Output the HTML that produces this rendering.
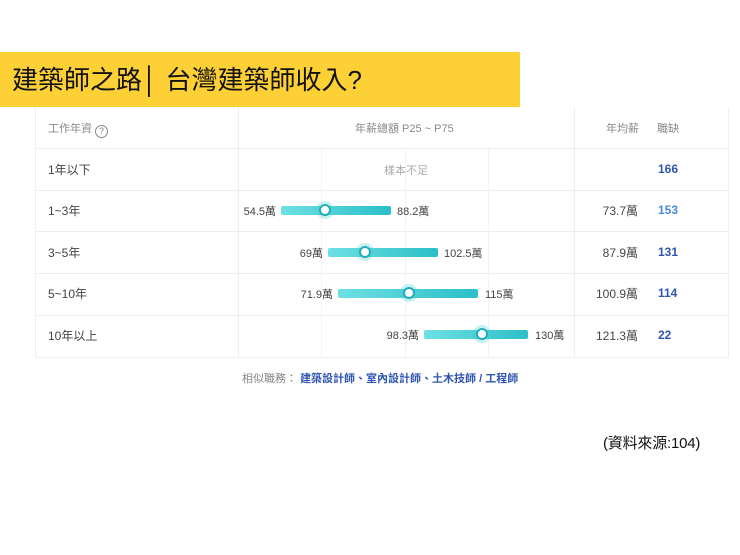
<!DOCTYPE html><html><head><meta charset="utf-8"><style>
body{margin:0;width:740px;height:555px;background:#fff;position:relative;overflow:hidden;font-family:"Liberation Sans","Noto Sans CJK TC",sans-serif}
.a{position:absolute;white-space:nowrap}
.ban{left:0;top:52px;width:520px;height:55px;background:#fdd135}
.t{left:12px;top:62px;font-size:26px;color:#111;line-height:36px}
.tbl{left:35px;top:107px;width:692px;height:250px;border:1px solid #f0f0f0;border-top:none}
.h{left:0;width:692px;height:1px;background:#eee}
.v{top:0;width:1px;background:#eee}
.g{color:#888;font-size:11px}
.l{font-size:12px;color:#444}
.n{font-size:12px;color:#2e55b0;font-weight:bold}
.bar{height:9px;border-radius:2px;background:linear-gradient(90deg,#6ee0e3,#2bbfc8)}
.dot{width:8px;height:8px;border-radius:50%;background:#fff;border:2px solid #21aeb8;box-shadow:0 0 0 3px rgba(70,205,210,.3)}
</style></head><body>
<div class="a ban"></div>
<div class="a t">建築師之路│ 台灣建築師收入?</div>
<div class="a tbl">
<div class="a h" style="top:41px"></div><div class="a h" style="top:83px"></div><div class="a h" style="top:124px"></div><div class="a h" style="top:166px"></div><div class="a h" style="top:208px"></div>
<div class="a v" style="left:202px;height:250px"></div>
<div class="a v" style="left:538px;height:250px"></div>
<div class="a v" style="left:285px;top:41px;height:209px;background:#f3f3f3"></div>
<div class="a v" style="left:369px;top:41px;height:209px;background:#f3f3f3"></div>
<div class="a v" style="left:452px;top:41px;height:209px;background:#f3f3f3"></div>
</div>
<div class="a g" style="left:48px;top:120px">工作年資 <span style="display:inline-block;width:11px;height:11px;border:1px solid #888;border-radius:50%;font-size:9px;text-align:center;line-height:11px;vertical-align:-2px">?</span></div>
<div class="a g" style="left:355px;top:120px">年薪總額 P25 ~ P75</div>
<div class="a g" style="left:606px;top:120px">年均薪</div>
<div class="a g" style="left:657px;top:120px">職缺</div>
<div class="a l" style="left:48px;top:161px">1年以下</div>
<div class="a l" style="left:48px;top:202px">1~3年</div>
<div class="a l" style="left:48px;top:244px">3~5年</div>
<div class="a l" style="left:48px;top:285px">5~10年</div>
<div class="a l" style="left:48px;top:327px">10年以上</div>
<div class="a g" style="left:384px;top:162px;color:#aaa">樣本不足</div>
<div class="a n" style="left:658px;top:162px">166</div>
<div class="a n" style="left:658px;top:203px;color:#4a88e0">153</div>
<div class="a n" style="left:658px;top:245px">131</div>
<div class="a n" style="left:658px;top:286px">114</div>
<div class="a n" style="left:658px;top:328px">22</div>
<div class="a l" style="right:102px;top:202px">73.7萬</div>
<div class="a l" style="right:102px;top:244px">87.9萬</div>
<div class="a l" style="right:102px;top:285px">100.9萬</div>
<div class="a l" style="right:102px;top:327px">121.3萬</div>
<div class="a bar" style="left:281px;top:206px;width:110px"></div><div class="a dot" style="left:319px;top:204px"></div>
<div class="a l" style="right:464px;top:203px;font-size:11px">54.5萬</div><div class="a l" style="left:397px;top:203px;font-size:11px">88.2萬</div>
<div class="a bar" style="left:328px;top:248px;width:110px"></div><div class="a dot" style="left:359px;top:246px"></div>
<div class="a l" style="right:417px;top:245px;font-size:11px">69萬</div><div class="a l" style="left:444px;top:245px;font-size:11px">102.5萬</div>
<div class="a bar" style="left:338px;top:289px;width:140px"></div><div class="a dot" style="left:403px;top:287px"></div>
<div class="a l" style="right:407px;top:286px;font-size:11px">71.9萬</div><div class="a l" style="left:485px;top:286px;font-size:11px">115萬</div>
<div class="a bar" style="left:424px;top:330px;width:104px"></div><div class="a dot" style="left:476px;top:328px"></div>
<div class="a l" style="right:321px;top:327px;font-size:11px">98.3萬</div><div class="a l" style="left:535px;top:327px;font-size:11px">130萬</div>
<div class="a g" style="left:242px;top:370px">相似職務： <span style="color:#2e55b0;font-weight:bold">建築設計師、室內設計師、土木技師 / 工程師</span></div>
<div class="a" style="left:603px;top:432px;font-size:15px;color:#111;letter-spacing:-0.2px">(資料來源:104)</div>
</body></html>
